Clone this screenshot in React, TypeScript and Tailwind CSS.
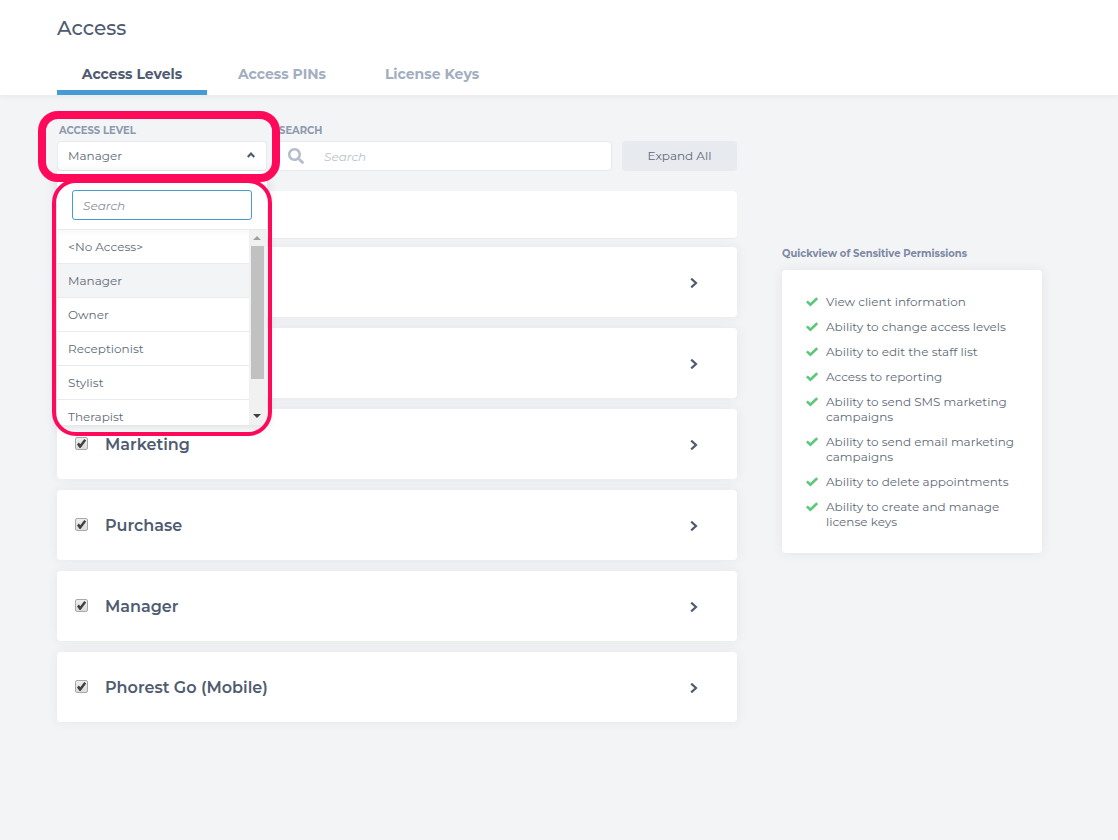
import React, { useState } from 'react';
import { FaSearch } from 'react-icons/fa';

const TABS = ['Access Levels', 'Access PINs', 'License Keys'];

const LEVELS = ['<No Access>', 'Manager', 'Owner', 'Receptionist', 'Stylist', 'Therapist'];

// The first two sections sit behind the open menu
const SECTIONS = ['', '', 'Marketing', 'Purchase', 'Manager', 'Phorest Go (Mobile)'];

const PERMISSIONS = [
  'View client information',
  'Ability to change access levels',
  'Ability to edit the staff list',
  'Access to reporting',
  'Ability to send SMS marketing campaigns',
  'Ability to send email marketing campaigns',
  'Ability to delete appointments',
  'Ability to create and manage license keys',
];

const Header: React.FC = () => {
  const [tab, setTab] = useState('Access Levels');

  return (
    <header className="bg-white px-[57px] pt-4 shadow-[0_1px_6px_rgba(0,0,0,0.06)]">
      <h1 className="text-[20px] leading-6 font-medium text-[#4f5b70]">Access</h1>
      <nav className="flex mt-[18px]">
        {TABS.map((t) => (
          <button
            key={t}
            onClick={() => setTab(t)}
            className={`w-[150px] h-[37px] border-b-[5px] text-[14px] leading-6 font-bold ${
              t === tab ? 'border-[#459bd3] text-[#4f5b70]' : 'border-transparent text-[#a3aec0]'
            }`}
          >
            {t}
          </button>
        ))}
      </nav>
    </header>
  );
};

const LevelMenu: React.FC<{ level: string; onPick: (level: string) => void }> = ({ level, onPick }) => (
  <div className="absolute z-10 top-full left-0 right-0 h-[254px] bg-white shadow-[0_3px_10px_rgba(40,50,70,0.16)] flex flex-col">
    <div className="h-[58px] shrink-0 px-[15px] pt-[19px]">
      <input
        aria-label="Search levels"
        placeholder="Search"
        className="w-full h-[30px] px-[10px] rounded-[3px] border border-[#459bd3] text-[12px] italic outline-none placeholder:text-[#8a929e]"
      />
    </div>
    <div className="flex flex-1 min-h-0 border-t border-[#e7eaee] shadow-[inset_0_3px_4px_rgba(0,0,0,0.03)]">
      <ul className="flex-1 overflow-hidden">
        {LEVELS.map((l) => (
          <li key={l}>
            <button
              onClick={() => onPick(l)}
              className={`block w-full h-[34px] px-[11px] border-b border-[#e7eaee] text-left text-[12px] text-[#616b78] ${
                l === level ? 'bg-[#f3f4f6]' : ''
              }`}
            >
              {l}
            </button>
          </li>
        ))}
      </ul>
      {/* Scroll track */}
      <div className="w-[18px] px-[2px] bg-[#f1f1f1] flex flex-col items-start">
        <svg className="my-[6px] ml-[2px]" width="8" height="4" viewBox="0 0 8 4">
          <path d="M0 4 4 0 8 4Z" fill="#a0a0a0" />
        </svg>
        <div className="w-[13px] h-[133px] bg-[#c1c1c1]" />
        <svg className="mt-auto mb-[7px] ml-[2px]" width="8" height="4" viewBox="0 0 8 4">
          <path d="M0 0 4 4 8 0Z" fill="#404040" />
        </svg>
      </div>
    </div>
  </div>
);

const LevelSelect: React.FC = () => {
  const [level, setLevel] = useState('Manager');

  return (
    <div className="relative w-[210px] shrink-0">
      <label htmlFor="level" className="block pl-[2px] mb-[3px] text-[10px] leading-[15px] font-bold text-[#8f99ae]">
        ACCESS LEVEL
      </label>
      <div className="relative">
        <select
          id="level"
          value={level}
          onChange={(e) => setLevel(e.target.value)}
          className="appearance-none block w-full h-[30px] px-[10px] bg-white rounded-[4px] border border-[#e7eaee] text-[12px] text-[#616b78]"
        >
          {LEVELS.map((l) => (
            <option key={l}>{l}</option>
          ))}
        </select>
        <svg
          className="absolute right-3 top-[11px] pointer-events-none"
          width="8"
          height="6"
          viewBox="0 0 8 6"
          fill="none"
          stroke="#4f5b70"
          strokeWidth="2.2"
        >
          <path d="M0.8 5 4 1.6 7.2 5" />
        </svg>
        <LevelMenu level={level} onPick={setLevel} />
      </div>

      {/* Highlight rings */}
      <div className="absolute z-20 -left-[5px] -right-[5px] top-[56px] h-[257px] rounded-[24px] border-4 border-[#ff0a5b] pointer-events-none" />
      <div className="absolute z-20 -left-[19px] -right-[13px] -top-[12px] h-[71px] rounded-[20px] border-8 border-[#ff0a5b] pointer-events-none" />
    </div>
  );
};

const SectionRow: React.FC<{ title: string }> = ({ title }) => (
  <section className="h-[70px] px-[18px] bg-white rounded-[4px] shadow-[0_0_12px_rgba(40,50,70,0.07)] flex items-center justify-between">
    <label className="flex items-center gap-[17px] pt-[2px] text-[16px] leading-6 font-semibold text-[#4f5b70]">
      {title && (
        <span className="relative size-[13px] mb-1">
          <input
            type="checkbox"
            defaultChecked
            className="peer appearance-none block size-[13px] rounded-[2px] border border-[#a9a9a9] bg-linear-to-b from-[#eeeeee] to-[#dcdcdc]"
          />
          <svg className="absolute inset-0 hidden peer-checked:block pointer-events-none" width="13" height="13" viewBox="0 0 13 13">
            <path d="M2 7.4 3.8 5.6 5.3 7.2 9.3 2 11.2 3.6 5.6 10.9 4.6 10.9Z" fill="#404040" />
          </svg>
        </span>
      )}
      {title}
    </label>
    <button aria-label="Expand section" className="mr-[21px] pt-[2px]">
      <svg width="8" height="10" viewBox="0 0 8 10" fill="none" stroke="#4f5b70" strokeWidth="2.2">
        <path d="M1.2 0.6 6 5 1.2 9.4" />
      </svg>
    </button>
  </section>
);

const Quickview: React.FC = () => (
  <aside className="w-[260px] shrink-0 mt-[123px]">
    <h2 className="mb-[9px] text-[10px] leading-[15px] font-bold text-[#7d88a3]">Quickview of Sensitive Permissions</h2>
    <ul className="p-6 bg-white rounded-[4px] shadow-[0_0_12px_rgba(40,50,70,0.08)] space-y-[10px]">
      {PERMISSIONS.map((p) => (
        <li key={p} className="flex gap-2 text-[12px] leading-[15px] text-[#616b78]">
          <svg className="mt-[3px] shrink-0" width="12" height="10" viewBox="0 0 12 10" fill="none" stroke="#5ac878" strokeWidth="2.6">
            <path d="M0.9 4.4 4.4 7.7 11.2 1.1" />
          </svg>
          {p}
        </li>
      ))}
    </ul>
  </aside>
);

const App: React.FC = () => {
  return (
    <div className="min-h-screen bg-[#f3f4f6] font-['Montserrat','Inter',sans-serif]">
      <Header />

      <main className="flex gap-[45px] pl-[57px] pr-[76px] pt-7">
        <div className="flex-1 min-w-0">
          {/* Filters */}
          <div className="flex items-end gap-[10px]">
            <LevelSelect />
            <div className="flex-1 min-w-0">
              <label htmlFor="search" className="block pl-[2px] mb-[3px] text-[10px] leading-[15px] font-bold text-[#8f99ae]">
                SEARCH
              </label>
              <div className="relative">
                <FaSearch className="absolute left-[11px] top-[7px] size-4 text-[#b5bdcd]" />
                <input
                  id="search"
                  placeholder="Search"
                  className="block w-full h-[30px] pl-[46px] bg-white rounded-[4px] border border-[#e7eaee] text-[12px] italic outline-none placeholder:text-[#bcc1c9]"
                />
              </div>
            </div>
            <button className="w-[115px] h-[30px] rounded-[4px] bg-[#e7eaef] text-[12px] text-[#616b78]">
              Expand All
            </button>
          </div>

          {/* Permission sections */}
          <div className="h-12 mt-5 mb-2 bg-white rounded-[4px] border-b border-[#e7eaee]" />
          <div className="flex flex-col gap-[11px]">
            {SECTIONS.map((title, i) => (
              <SectionRow key={i} title={title} />
            ))}
          </div>
        </div>

        <Quickview />
      </main>
    </div>
  );
};

export default App;
